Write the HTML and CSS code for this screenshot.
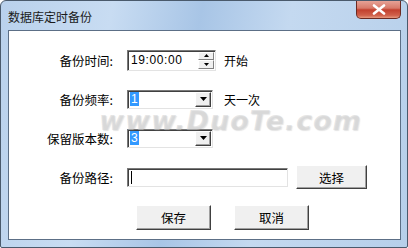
FILE: index.html
```html
<!DOCTYPE html>
<html>
<head>
<meta charset="utf-8">
<link rel="stylesheet" href="styles.css">
</head>
<body>
<div class="window">
  <div class="titlebar">
    <span class="title">数据库定时备份</span>
    <div class="close"><svg width="14" height="11" viewBox="0 0 14 11"><path d="M2 1.5 L12 9.5 M12 1.5 L2 9.5" stroke="#fff" stroke-width="2.6" stroke-linecap="round"/></svg></div>
  </div>
  <div class="client">
    <div class="row">
      <label class="lbl">备份时间:</label>
      <div class="field time"><span class="val">19:00:00</span>
        <div class="spin"><div class="spin-up"><svg width="5" height="3" viewBox="0 0 5 3"><path d="M2.5 0 L5 3 L0 3Z" fill="#000"/></svg></div><div class="spin-dn"><svg width="5" height="3" viewBox="0 0 5 3"><path d="M0 0 L5 0 L2.5 3Z" fill="#000"/></svg></div></div>
      </div>
      <span class="after">开始</span>
    </div>
    <div class="row">
      <label class="lbl">备份频率:</label>
      <div class="field combo"><span class="sel">1</span><div class="drop"><svg width="7" height="4" viewBox="0 0 7 4"><path d="M0 0 L7 0 L3.5 4Z" fill="#000"/></svg></div></div>
      <span class="after after2">天一次</span>
    </div>
    <div class="row">
      <label class="lbl">保留版本数:</label>
      <div class="field combo"><span class="sel">3</span><div class="drop"><svg width="7" height="4" viewBox="0 0 7 4"><path d="M0 0 L7 0 L3.5 4Z" fill="#000"/></svg></div></div>
    </div>
    <div class="row">
      <label class="lbl">备份路径:</label>
      <div class="field path"><span class="caret"></span></div>
      <button class="btn btn-choose">选择</button>
    </div>
    <div class="actions">
      <button class="btn">保存</button>
      <button class="btn">取消</button>
    </div>
    <div class="watermark">www.DuoTe.com</div>
  </div>
</div>
</body>
</html>
```
FILE: styles.css
```css
html, body {
  margin: 0;
  padding: 0;
  background: #fff;
}
body {
  font-family: "Noto Sans CJK SC", "Liberation Sans", sans-serif;
  font-size: 12px;
  color: #000;
}
.window {
  width: 408px;
  height: 248px;
  box-sizing: border-box;
  border: 1px solid #4a5a6c;
  border-radius: 6px 6px 2px 2px;
  background: linear-gradient(100deg, #b9d1ec 0%, #c8dcf2 25%, #a8c5e6 45%, #c4d9f0 65%, #b6cfea 100%);
  display: flex;
  flex-direction: column;
  overflow: hidden;
}
.titlebar {
  height: 29px;
  display: flex;
  align-items: center;
  position: relative;
  padding-left: 7px;
}
.title {
  font-size: 12px;
  color: #1a1a1a;
  margin-top: 1px;
}
.close {
  position: absolute;
  right: 6px;
  top: -1px;
  width: 45px;
  height: 19px;
  box-sizing: border-box;
  border: 1px solid #6b2a22;
  border-top: none;
  border-radius: 0 0 5px 5px;
  background: linear-gradient(#e8a89c 0%, #d77a6a 45%, #c2402e 55%, #d0604a 85%, #e69a80 100%);
  display: flex;
  align-items: center;
  justify-content: center;
}
.client {
  flex: 1;
  margin: 0 6px 7px 7px;
  background: #fff;
  border: 1px solid #5c6f86;
  position: relative;
  padding-top: 19px;
  display: flex;
  flex-direction: column;
}
.row {
  display: flex;
  align-items: center;
  height: 20px;
  margin-bottom: 19px;
}
.lbl {
  width: 104px;
  text-align: right;
  flex: none;
  margin-right: 14px;
  font-size: 12.5px;
}
.field {
  box-sizing: border-box;
  background: #fff;
  border-top: 1px solid #7a7a7a;
  border-left: 1px solid #7a7a7a;
  border-right: 1px solid #e3e3e3;
  border-bottom: 1px solid #e3e3e3;
  box-shadow: inset 1px 1px 0 #404040;
  display: flex;
  align-items: center;
  position: relative;
}
.time {
  width: 89px;
  height: 21px;
  font-family: "Liberation Sans", sans-serif;
  font-size: 12px;
}
.val {
  padding-left: 3px;
  letter-spacing: 0.6px;
}
.spin {
  position: absolute;
  right: 1px;
  top: 1px;
  bottom: 1px;
  width: 16px;
  display: flex;
  flex-direction: column;
}
.spin-up, .spin-dn {
  flex: 1;
  background: #f0f0f0;
  border: 1px solid;
  border-color: #fff #808080 #808080 #fff;
  display: flex;
  align-items: center;
  justify-content: center;
}
.after {
  margin-left: 8px;
}
.after2 {
  margin-left: 11px;
}
.combo {
  width: 86px;
  height: 19px;
  font-family: "Liberation Sans", sans-serif;
}
.sel {
  margin-left: 2px;
  background: #3399ff;
  color: #fff;
  padding: 0 1px;
  line-height: 14px;
  font-size: 12px;
}
.drop {
  position: absolute;
  right: 1px;
  top: 1px;
  bottom: 1px;
  width: 16px;
  box-sizing: border-box;
  background: #f0f0f0;
  border: 1px solid;
  border-color: #fff #404040 #404040 #fff;
  box-shadow: inset -1px -1px 0 #a0a0a0;
  display: flex;
  align-items: center;
  justify-content: center;
}
.path {
  width: 161px;
  height: 19px;
}
.caret {
  width: 1px;
  height: 13px;
  background: #000;
  margin-left: 3px;
}
.btn {
  box-sizing: border-box;
  width: 75px;
  height: 25px;
  padding: 0;
  font-family: "Noto Sans CJK SC", "Liberation Sans", sans-serif;
  font-size: 12.5px;
  color: #000;
  background: #f0f0f0;
  border: 1px solid;
  border-color: #fff #404040 #404040 #fff;
  box-shadow: inset -1px -1px 0 #a0a0a0;
  border-radius: 0;
}
.btn-choose {
  width: 71px;
  height: 24px;
  margin-left: 8px;
}
.actions {
  display: flex;
  gap: 23px;
  padding-left: 127px;
  margin-top: -1px;
}
.watermark {
  position: absolute;
  left: 90px;
  top: 75px;
  font-family: "DejaVu Sans", "Liberation Sans", sans-serif;
  font-weight: bold;
  font-style: italic;
  font-size: 27px;
  line-height: 30px;
  color: rgba(205, 205, 205, 0.5);
  letter-spacing: 1px;
  text-shadow: 1px 1px 1px rgba(120,120,120,0.2);
  pointer-events: none;
}
```
